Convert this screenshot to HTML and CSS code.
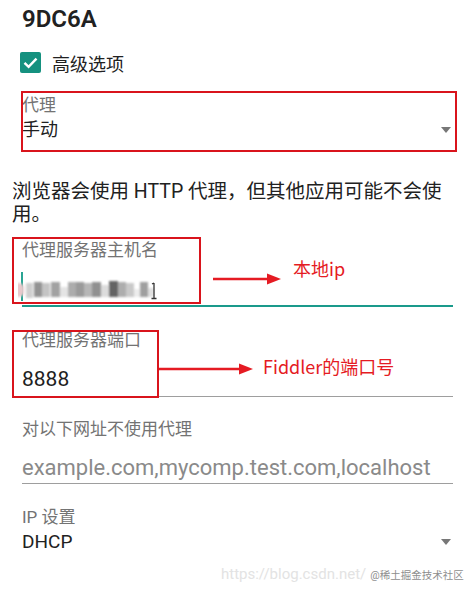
FILE: index.html
```html
<!DOCTYPE html>
<html lang="zh">
<head>
    <meta charset="UTF-8">
    <title>9DC6A</title>
    <link rel="stylesheet" href="styles.css">
</head>
<body>
    <div class="page">
        <h2 class="title">9DC6A</h2>

        <div class="check-row">
            <span class="checkbox">
                <svg width="21" height="21" viewBox="0 0 21 21">
                    <path d="M4.5 10.8 L8.6 14.8 L16.5 6.6" fill="none" stroke="#fff" stroke-width="2.4"/>
                </svg>
            </span>
            <span class="check-text">高级选项</span>
        </div>

        <div class="field proxy-field">
            <div class="label">代理</div>
            <div class="select-value">
                <span>手动</span>
                <span class="caret"></span>
            </div>
            <div class="mark mark-proxy"></div>
        </div>

        <p class="desc">浏览器会使用 HTTP 代理，但其他应用可能不会使用。</p>

        <div class="field host-field">
            <div class="label">代理服务器主机名</div>
            <div class="input input-focus">
                <svg class="ip-blur" width="150" height="34" viewBox="0 0 150 34">
                    <defs>
                        <filter id="soft"><feGaussianBlur stdDeviation="0.8"/></filter>
                    </defs>
                    <rect x="3" y="1" width="2" height="29" fill="#2aa493"/>
                    <g filter="url(#soft)">
                        <rect x="-4" y="12" width="10" height="14" rx="5" fill="#e7c9cc"/>
                        <rect x="8" y="12" width="7" height="15" fill="#cfcfcf"/>
                        <rect x="16" y="11" width="8" height="15" fill="#939393"/>
                        <rect x="24" y="12" width="8" height="14" fill="#c4c4c4"/>
                        <rect x="33" y="11" width="9" height="15" fill="#a2a2a2"/>
                        <rect x="42" y="16" width="8" height="10" fill="#e4e4e4"/>
                        <rect x="50" y="11" width="8" height="15" fill="#acacac"/>
                        <rect x="58" y="11" width="8" height="15" fill="#9a9a9a"/>
                        <rect x="66" y="12" width="8" height="14" fill="#b6b6b6"/>
                        <rect x="74" y="11" width="9" height="15" fill="#909090"/>
                        <rect x="83" y="14" width="8" height="12" fill="#dcdcdc"/>
                        <rect x="91" y="10" width="9" height="16" fill="#636363"/>
                        <rect x="100" y="11" width="8" height="15" fill="#adadad"/>
                        <rect x="108" y="12" width="8" height="14" fill="#c9c9c9"/>
                        <rect x="116" y="18" width="6" height="8" fill="#ececec"/>
                        <rect x="122" y="11" width="8" height="15" fill="#9f9f9f"/>
                        <rect x="130" y="17" width="6" height="9" fill="#e0e0e0"/>
                    </g>
                    <path d="M136 12 L136 28 M133.5 27.5 L138.5 27.5 M134 13 L136 12" stroke="#333" stroke-width="1.3" fill="none"/>
                </svg>
            </div>
            <div class="mark mark-host"></div>
            <svg class="arrow arrow-host" width="70" height="12" viewBox="0 0 70 12">
                <path d="M0 6 L56 6" stroke="#e51b23" stroke-width="2.4"/>
                <path d="M54 0.5 L68 6 L54 11.5 Z" fill="#e51b23"/>
            </svg>
            <span class="note note-host">本地ip</span>
        </div>

        <div class="field port-field">
            <div class="label">代理服务器端口</div>
            <div class="input">8888</div>
            <div class="mark mark-port"></div>
            <svg class="arrow arrow-port" width="96" height="12" viewBox="0 0 96 12">
                <path d="M0 6 L82 6" stroke="#e51b23" stroke-width="2.4"/>
                <path d="M80 0.5 L94 6 L80 11.5 Z" fill="#e51b23"/>
            </svg>
            <span class="note note-port">Fiddler的端口号</span>
        </div>

        <div class="field bypass-field">
            <div class="label">对以下网址不使用代理</div>
            <div class="input placeholder">example.com,mycomp.test.com,localhost</div>
        </div>

        <div class="field ip-field">
            <div class="label">IP 设置</div>
            <div class="select-value">
                <span>DHCP</span>
                <span class="caret"></span>
            </div>
        </div>

        <div class="watermark">
            <span class="wm-url">https://blog.csdn.net/</span>
            <span class="wm-tag">@稀土掘金技术社区</span>
        </div>
    </div>
</body>
</html>
```

FILE: styles.css
```css
body {
    margin: 0;
    background: #fff;
    font-family: Roboto, "Noto Sans CJK SC", sans-serif;
    color: #212121;
}
.page {
    position: relative;
    width: 473px;
    height: 593px;
    overflow: hidden;
}
.title {
    margin: 5px 0 0 22px;
    font-size: 24px;
    font-weight: 600;
    line-height: 28px;
}
.check-row {
    display: flex;
    align-items: center;
    margin: 19px 0 0 20px;
    height: 21px;
}
.checkbox {
    display: block;
    width: 21px;
    height: 21px;
    border-radius: 2px;
    background: #15917f;
}
.checkbox svg {
    display: block;
}
.check-text {
    margin-left: 11px;
    font-size: 18px;
}
.field {
    position: relative;
    margin: 0 20px 0 22px;
}
.label {
    font-size: 17px;
    line-height: 20px;
    color: #737373;
}
.select-value {
    display: flex;
    justify-content: space-between;
    align-items: center;
    margin-top: 2px;
    font-size: 18px;
    line-height: 26px;
}
.caret {
    width: 0;
    height: 0;
    margin-right: 2px;
    border-left: 5.5px solid transparent;
    border-right: 5.5px solid transparent;
    border-top: 6px solid #777;
}
.proxy-field {
    margin-top: 22px;
}
.desc {
    margin: 37px 14px 0 12px;
    font-size: 19.5px;
    line-height: 23px;
}
.input {
    height: 45px;
    box-sizing: border-box;
    padding-top: 15px;
    font-size: 21px;
    line-height: 28px;
    border-bottom: 1px solid #9e9e9e;
}
.input-focus {
    height: 47px;
    padding-top: 11px;
    border-bottom: 2px solid #1a9a8b;
}
.ip-blur {
    display: block;
    margin-left: -4px;
}
.placeholder {
    font-size: 22px;
    color: #8a8a8a;
}
.host-field {
    margin-top: 14px;
}
.port-field {
    margin-top: 23px;
}
.port-field .input {
    height: 47px;
    padding-top: 15px;
}
.bypass-field {
    margin-top: 22px;
}
.ip-field {
    margin-top: 23px;
}
.ip-field .select-value {
    font-size: 19px;
}
.mark {
    position: absolute;
    box-sizing: border-box;
    border: 2px solid #d9141c;
}
.mark-proxy {
    left: -1px;
    top: -4px;
    width: 436px;
    height: 61px;
}
.mark-host {
    left: -10px;
    top: -3px;
    width: 189px;
    height: 67px;
}
.mark-port {
    left: -10px;
    top: 0;
    width: 147px;
    height: 68px;
}
.arrow {
    position: absolute;
}
.arrow-host {
    left: 191px;
    top: 33px;
}
.arrow-port {
    left: 137px;
    top: 33px;
}
.note {
    position: absolute;
    color: #e51b23;
    font-family: "Noto Sans CJK SC", sans-serif;
    font-size: 18px;
    line-height: 24px;
    white-space: nowrap;
}
.note-host {
    left: 271px;
    top: 16px;
}
.note-port {
    left: 241px;
    top: 24px;
}
.watermark {
    position: absolute;
    left: 221px;
    top: 565px;
    display: flex;
    align-items: center;
    gap: 4px;
    white-space: nowrap;
}
.wm-url {
    font-size: 15px;
    color: #e3e3e3;
    font-family: Roboto, sans-serif;
}
.wm-tag {
    font-size: 10.5px;
    color: #8e8e8e;
}
```
